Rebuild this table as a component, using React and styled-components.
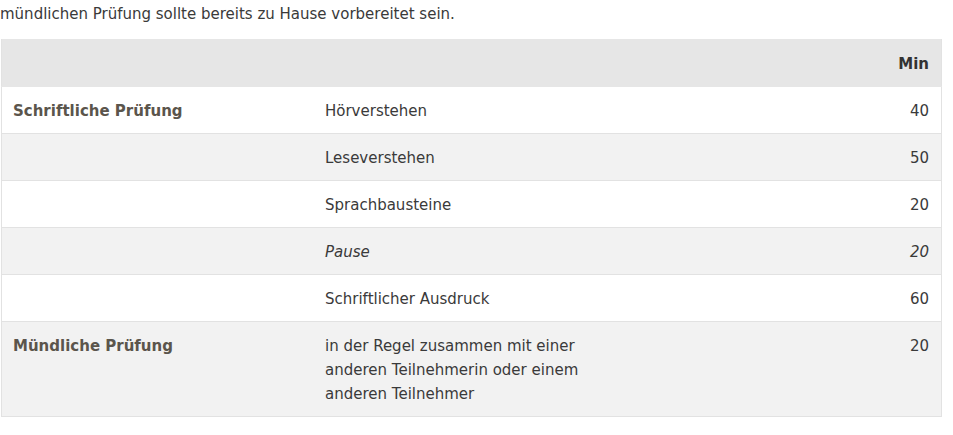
import React from "react";
import styled, { createGlobalStyle } from "styled-components";

const GlobalStyle = createGlobalStyle`
	body {
		margin: 0;
		background: #fff;
		font-family: "DejaVu Sans", Verdana, sans-serif;
		font-size: 15px;
		color: #3a3a3a;
	}
`;

const Intro = styled.p`
	margin: 2px 0 13px;
	line-height: 24px;
`;

const Table = styled.table`
	margin-left: 1px;
	width: 941px;
	border-collapse: collapse;
	border: 1px solid #e2e2e2;
	border-top: none;
	line-height: 24px;
`;

const HeadRow = styled.tr`
	background: #e6e6e6;
	border-bottom: 1px solid #e6e6e6;
`;

const Row = styled.tr`
	background: ${(props) => (props.striped ? "#f2f2f2" : "#fff")};
	border-bottom: 1px solid #e2e2e2;
`;

const Cell = styled.td`
	padding: 12px 12px 10px 11px;
	vertical-align: top;
	text-align: ${(props) => (props.right ? "right" : "left")};
	font-style: ${(props) => (props.italic ? "italic" : "normal")};
	width: ${(props) => props.w || "auto"};
`;

const HeadCell = styled.th`
	padding: 13px 12px 10px;
	text-align: right;
	font-weight: bold;
	color: #333;
`;

const Label = styled.strong`
	color: #5b554c;
`;

const rows = [
	{ label: "Schriftliche Prüfung", part: "Hörverstehen", min: 40 },
	{ part: "Leseverstehen", min: 50 },
	{ part: "Sprachbausteine", min: 20 },
	{ part: "Pause", min: 20, italic: true },
	{ part: "Schriftlicher Ausdruck", min: 60 },
	{
		label: "Mündliche Prüfung",
		part: "in der Regel zusammen mit einer anderen Teilnehmerin oder einem anderen Teilnehmer",
		min: 20,
	},
];

export default function App() {
	return (
		<>
			<GlobalStyle />
			<Intro>mündlichen Prüfung sollte bereits zu Hause vorbereitet sein.</Intro>
			<Table>
				<thead>
					<HeadRow>
						<HeadCell />
						<HeadCell />
						<HeadCell>Min</HeadCell>
					</HeadRow>
				</thead>
				<tbody>
					{rows.map((r, i) => (
						<Row key={i} striped={i % 2 === 1}>
							<Cell w="289px">{r.label && <Label>{r.label}</Label>}</Cell>
							<Cell w="268px" italic={r.italic}>
								{r.part}
							</Cell>
							<Cell right italic={r.italic}>
								{r.min}
							</Cell>
						</Row>
					))}
				</tbody>
			</Table>
		</>
	);
}
